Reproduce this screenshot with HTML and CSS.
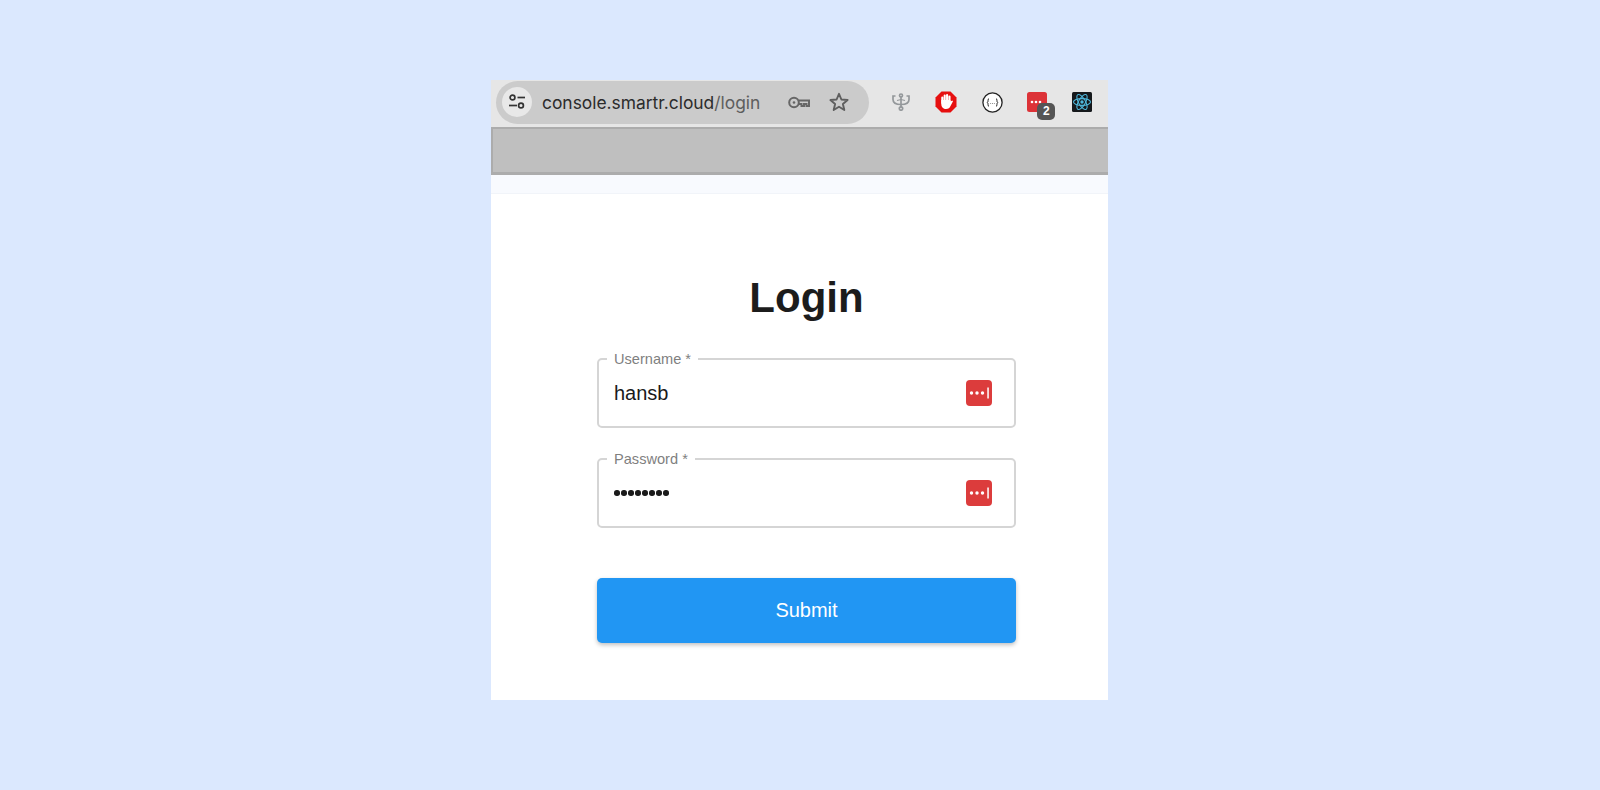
FILE: index.html
```html
<!DOCTYPE html>
<html>
    <head>
        <title>Login</title>
        <link rel="stylesheet" href="styles.css">
    </head>
    <body>
        <div class="window">
            <div class="toolbar">
                <div class="urlBar">
                    <div class="siteInfo">
                        <svg width="18" height="18" viewBox="0 0 18 18" fill="none" stroke="#333" stroke-width="1.7">
                            <circle cx="4.5" cy="4.5" r="2.4"/>
                            <path d="M9.5 4.5H17"/>
                            <path d="M1 12.5H9"/>
                            <circle cx="13" cy="12.5" r="2.4"/>
                        </svg>
                    </div>
                    <div class="url">console.smartr.cloud<span>/login</span></div>
                    <svg class="keyIcon" width="22" height="13" viewBox="0 0 22 13" fill="none" stroke="#666" stroke-width="2">
                        <circle cx="6" cy="6.500" r="4.800"/>
                        <circle cx="6" cy="6.500" r="1.300" fill="#666" stroke="none"/>
                        <path d="M11 4.500H21V10H18.500V8H16V10H13.500V8H11"/>
                    </svg>
                    <svg class="starIcon" width="20" height="20" viewBox="0 0 20 20" fill="none" stroke="#5f5f5f" stroke-width="1.9" stroke-linejoin="round">
                        <path d="M10 1.800L12.400 7.500L18.600 8L13.900 12L15.300 18L10 14.800L4.700 18L6.100 12L1.400 8L7.600 7.500Z"/>
                    </svg>
                </div>
                <div class="extensions">
                    <svg width="18" height="18" viewBox="0 0 18 18" fill="none" stroke="#94989b" stroke-width="1.700">
                        <path d="M9 3V14.500"/>
                        <circle cx="9" cy="15.500" r="1.700"/>
                        <circle cx="9" cy="2.500" r="1.500"/>
                        <path d="M3.500 3H1V6.500C1 9.500 4 11.500 9 11.500C14 11.500 17 9.500 17 6.500V3H14.500"/>
                        <path d="M5 7.500L9 6.500L13 7.500" stroke-width="1.200"/>
                    </svg>
                    <svg width="22" height="22" viewBox="0 0 22 22">
                        <path d="M6.500 0.500H15.500L21.500 6.500V15.500L15.500 21.500H6.500L0.500 15.500V6.500Z" fill="#e60f0f"/>
                        <path d="M7.300 12V6.500M9.700 11V4.500M12.100 11V4M14.500 12V5.500" stroke="#fff" stroke-width="2.100" stroke-linecap="round"/>
                        <path d="M6.300 9H15.500V10.500L17.300 9.500L18 10.200L15.500 15C14.800 16.800 13.500 18 11 18C8.500 18 6.300 16.500 6.300 13Z" fill="#fff"/>
                    </svg>
                    <svg width="21" height="21" viewBox="0 0 21 21" fill="#fff" stroke="#222" stroke-width="1.300">
                        <circle cx="10.500" cy="10.500" r="9.600"/>
                        <path d="M7 6.500C5.500 6.500 6.500 10.500 5.300 10.500C6.500 10.500 5.500 14.500 7 14.500" fill="none" stroke-width="1"/>
                        <path d="M14 6.500C15.500 6.500 14.500 10.500 15.700 10.500C14.500 10.500 15.500 14.500 14 14.500" fill="none" stroke-width="1"/>
                        <path d="M8.300 11.500H9.100M10.100 11.500H10.900M11.900 11.500H12.700" stroke="#777" stroke-width="1"/>
                    </svg>
                    <div class="lastPass">
                        <svg width="20" height="20" viewBox="0 0 20 20">
                            <rect width="20" height="20" rx="2.500" fill="#dc3237"/>
                            <circle cx="5" cy="10" r="1.300" fill="#fff"/>
                            <circle cx="9" cy="10" r="1.300" fill="#fff"/>
                            <circle cx="13" cy="10" r="1.300" fill="#fff"/>
                        </svg>
                        <div class="badge">2</div>
                    </div>
                    <svg width="20" height="20" viewBox="0 0 20 20" fill="none" stroke="#4fb8dc" stroke-width="1.100">
                        <rect width="20" height="20" rx="1.500" fill="#16191c" stroke="none"/>
                        <ellipse cx="10" cy="10" rx="8.500" ry="3.400"/>
                        <ellipse cx="10" cy="10" rx="8.500" ry="3.400" transform="rotate(60 10 10)"/>
                        <ellipse cx="10" cy="10" rx="8.500" ry="3.400" transform="rotate(120 10 10)"/>
                        <circle cx="10" cy="10" r="1.700" fill="#4fb8dc" stroke="none"/>
                    </svg>
                </div>
            </div>
            <div class="grayBar"></div>
            <div class="lightBar"></div>
            <form class="loginForm">
                <h1>Login</h1>
                <fieldset class="field">
                    <legend>Username *</legend>
                    <div class="fieldRow">
                        <div class="value">hansb</div>
                        <svg class="passIcon" width="26" height="26" viewBox="0 0 26 26">
                            <rect width="26" height="26" rx="4" fill="#dc3c3c"/>
                            <circle cx="5.500" cy="13" r="1.700" fill="#fff"/>
                            <circle cx="11" cy="13" r="1.700" fill="#fff"/>
                            <circle cx="16.500" cy="13" r="1.700" fill="#fff"/>
                            <rect x="21.300" y="7.500" width="1.500" height="11" fill="#fff"/>
                        </svg>
                    </div>
                </fieldset>
                <fieldset class="field">
                    <legend>Password *</legend>
                    <div class="fieldRow">
                        <div class="value dots">
                            <i></i><i></i><i></i><i></i><i></i><i></i><i></i><i></i>
                        </div>
                        <svg class="passIcon" width="26" height="26" viewBox="0 0 26 26">
                            <rect width="26" height="26" rx="4" fill="#dc3c3c"/>
                            <circle cx="5.500" cy="13" r="1.700" fill="#fff"/>
                            <circle cx="11" cy="13" r="1.700" fill="#fff"/>
                            <circle cx="16.500" cy="13" r="1.700" fill="#fff"/>
                            <rect x="21.300" y="7.500" width="1.500" height="11" fill="#fff"/>
                        </svg>
                    </div>
                </fieldset>
                <button class="submit" type="button">Submit</button>
            </form>
        </div>
    </body>
</html>
```
FILE: styles.css
```css
html, body{
    height: 100%;
}
body{
    margin: 0px;
    padding: 80px 0 0 491px;
    box-sizing: border-box;
    background-color: #dbe8fe;
    font-family: "Liberation Sans", Arial, sans-serif;
    overflow: hidden;
}
.window{
    width: 617px;
    height: 620px;
    background-color: #ffffff;
}
.toolbar{
    height: 47px;
    background-color: #e6e6e6;
    display: flex;
    align-items: center;
    box-sizing: border-box;
    padding: 0 0 3px 5px;
}
.urlBar{
    width: 373px;
    height: 43px;
    box-sizing: border-box;
    padding-left: 6px;
    border-radius: 22px;
    background-color: #cbcbcb;
    display: flex;
    align-items: center;
}
.siteInfo{
    width: 30px;
    height: 30px;
    border-radius: 50%;
    background-color: #e8e8e8;
    display: flex;
    align-items: center;
    justify-content: center;
}
.url{
    margin-left: 10px;
    padding-top: 1px;
    width: 246px;
    font-family: Inter, "Liberation Sans", sans-serif;
    font-size: 17.4px;
    color: #2c2c2c;
    white-space: nowrap;
}
.url span{
    color: #5e5e5e;
}
.starIcon{
    margin-left: 19px;
}
.extensions{
    flex: 1;
    display: flex;
    align-items: center;
    justify-content: space-between;
    padding: 0 16px 0 23px;
}
.lastPass{
    position: relative;
    width: 20px;
    height: 20px;
}
.lastPass svg{
    display: block;
}
.badge{
    position: absolute;
    right: -8px;
    bottom: -8px;
    width: 18px;
    height: 17px;
    border-radius: 5px;
    background-color: #555555;
    color: #ffffff;
    font-size: 12px;
    font-weight: bold;
    line-height: 17px;
    text-align: center;
}
.grayBar{
    height: 43px;
    background-color: #bfbfbf;
    border: solid #acacac;
    border-width: 2px 0 3px 2px;
}
.lightBar{
    height: 18px;
    background-color: #f8fafe;
    border-bottom: 1px solid #f1f4f9;
}
.loginForm{
    width: 419px;
    margin-left: 106px;
    display: flex;
    flex-direction: column;
}
.loginForm h1{
    margin: 80px 0 0;
    text-align: center;
    font-size: 42px;
    line-height: 48px;
    font-weight: bold;
    color: #1c1c1c;
}
.field{
    margin: 0;
    padding: 0 22px 0 8px;
    height: 77px;
    box-sizing: border-box;
    border: 2px solid #d5d5d5;
    border-radius: 5px;
}
.loginForm h1 + .field{
    margin-top: 29px;
}
.field + .field{
    margin-top: 23px;
}
.field legend{
    padding: 0 7px;
    font-size: 14.6px;
    line-height: 16px;
    color: #7f7f7f;
}
.fieldRow{
    height: 59px;
    box-sizing: border-box;
    padding: 0 0 7px 7px;
    display: flex;
    align-items: center;
    justify-content: space-between;
}
.value{
    font-size: 20px;
    color: #1a1a1a;
}
.dots{
    display: flex;
    gap: 1.500px;
}
.dots i{
    width: 5.500px;
    height: 5.500px;
    border-radius: 50%;
    background-color: #1a1a1a;
}
.submit{
    margin-top: 50px;
    height: 65px;
    border: none;
    border-radius: 5px;
    background-color: #2196f3;
    color: #ffffff;
    font-family: "Liberation Sans", Arial, sans-serif;
    font-size: 20px;
    box-shadow: 0 2px 4px rgba(0,0,0,0.25);
}
```
